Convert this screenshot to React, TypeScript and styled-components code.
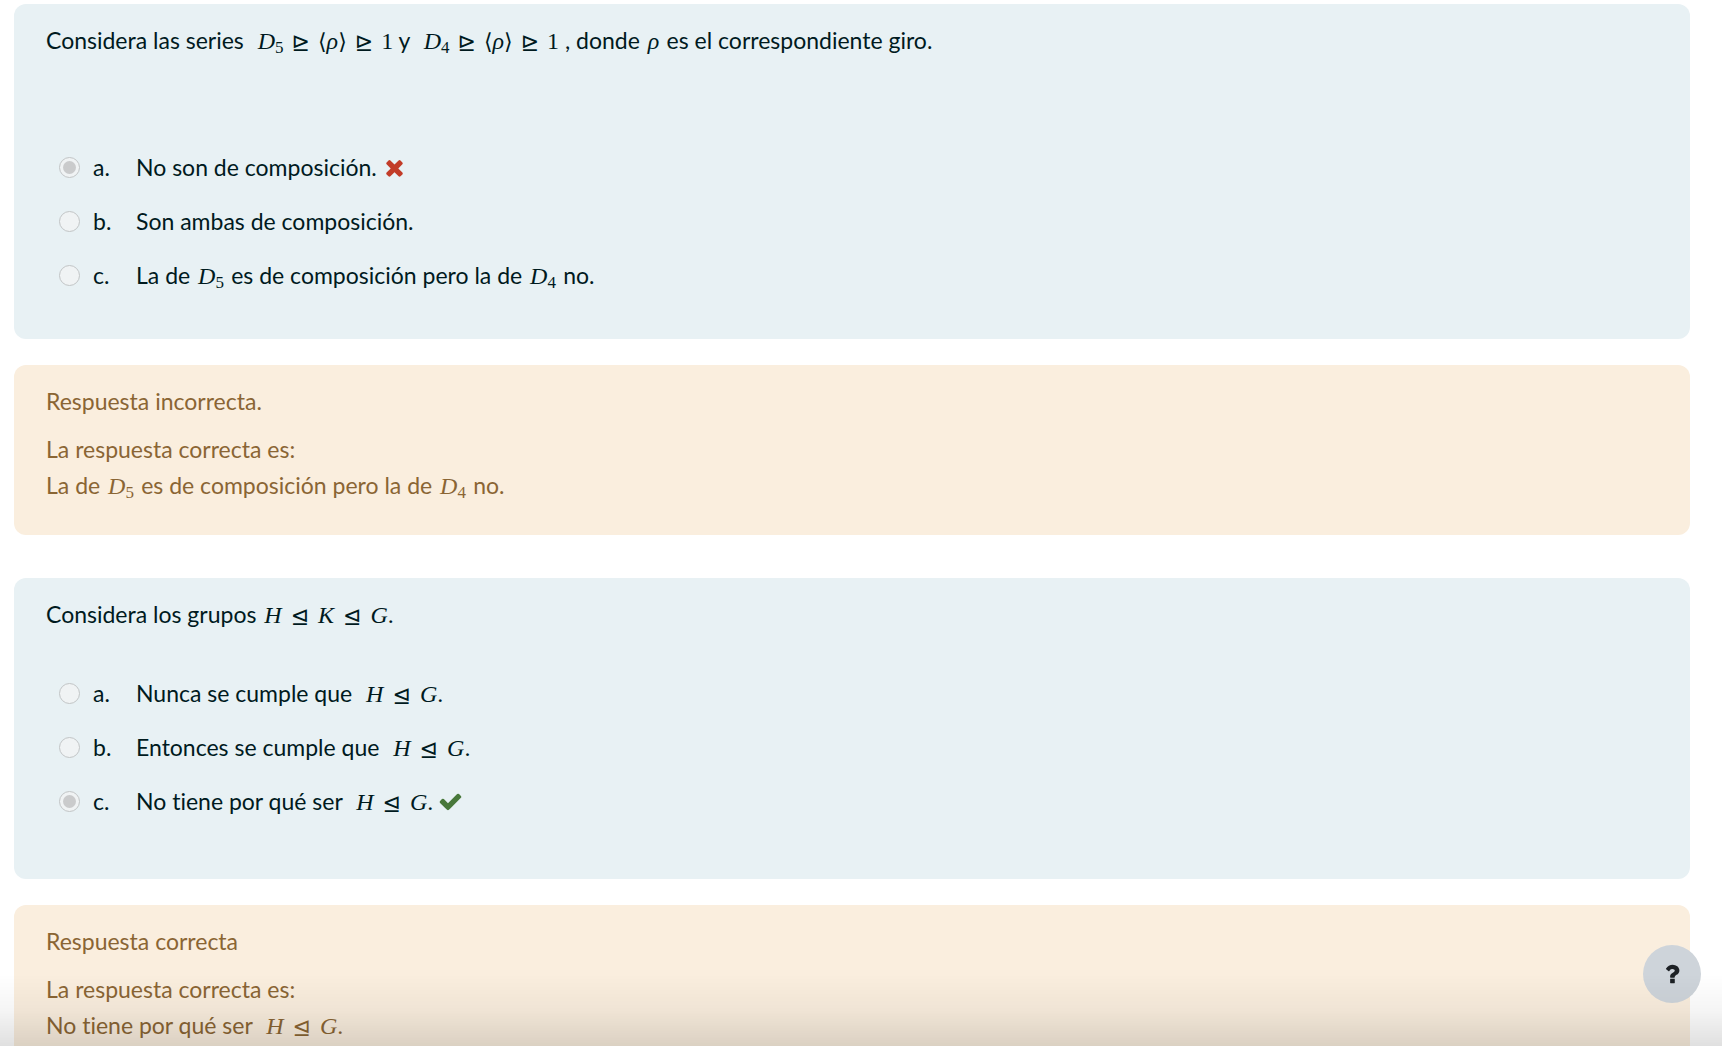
import React, { useId } from 'react';
import type { ReactNode } from 'react';
import styled, { createGlobalStyle } from 'styled-components';

const GlobalStyle = createGlobalStyle`
  *, *::before, *::after { box-sizing: border-box; }
  body {
    margin: 0;
    background: #fff;
    font-family: Lato, "Liberation Sans", sans-serif;
    font-size: 23px;
    line-height: 36px;
    font-variant-ligatures: none;
    color: #001a1e;
  }
`;

const Page = styled.main`
  height: 100vh;
  padding: 4px 32px 0 14px;
  overflow-y: auto;
  scrollbar-width: none;
`;

const Question = styled.article`
  margin-bottom: 43px;
`;

const Box = styled.section`
  padding: 18px 32px 32px;
  border-radius: 12px;
`;

const Formulation = styled(Box)`
  margin-bottom: 26px;
  background: #e8f1f4;
`;

const Feedback = styled(Box)`
  background: #faeede;
  color: #8a6534;
`;

const Text = styled.p`
  margin: 0;
`;

const Verdict = styled(Text)`
  margin-bottom: 12px;
`;

const Answers = styled.fieldset<{ $top: number; $bottom: number }>`
  display: flex;
  flex-direction: column;
  gap: 18px;
  min-width: 0;
  margin: ${({ $top }) => $top}px 0 ${({ $bottom }) => $bottom}px;
  padding: 0 0 0 13px;
  border: 0;
`;

const Answer = styled.div`
  display: flex;
  align-items: center;
`;

const Radio = styled.input`
  appearance: none;
  display: grid;
  place-items: center;
  flex: none;
  width: 21px;
  height: 21px;
  margin: 0 13px 0 0;
  border: 1px solid #c2c5c6;
  border-radius: 50%;
  background: #f0f3f4;

  &:checked::before {
    content: "";
    width: 13px;
    height: 13px;
    border-radius: 50%;
    background: #cacbcc;
  }
`;

const AnswerLabel = styled.label`
  display: flex;
`;

const Letter = styled.span`
  width: 43px;
`;

const Mark = styled.svg<{ $correct: boolean }>`
  width: 25px;
  height: 25px;
  margin-left: 5px;
  fill: ${({ $correct }) => ($correct ? '#48783a' : '#c23c28')};
`;

const Formula = styled.span<{ $wide?: boolean }>`
  margin-left: ${({ $wide }) => ($wide ? 8 : 2)}px;
  font-family: "Liberation Serif", "DejaVu Sans", serif;
  font-size: 24px;
  line-height: 0;
  white-space: nowrap;

  sub {
    font-size: 17px;
    line-height: 0;
    vertical-align: -4px;
  }
`;

const Relation = styled.span<{ $tight?: boolean }>`
  margin: 0 ${({ $tight }) => ($tight ? 8 : 9)}px;
  font-family: "DejaVu Sans", sans-serif;
  font-size: 22px;
  line-height: 0;
  vertical-align: -1px;
`;

const Bracket = styled.span`
  font-family: "DejaVu Sans", sans-serif;
  font-size: 22px;
  line-height: 0;
`;

const BottomShade = styled.div`
  position: fixed;
  inset: auto 0 0;
  z-index: 2;
  height: 72px;
  background: linear-gradient(to bottom, rgba(0, 0, 0, 0), rgba(0, 0, 0, 0.04) 50%, rgba(0, 0, 0, 0.12));
  pointer-events: none;
`;

const HelpButton = styled.button`
  position: fixed;
  right: 21px;
  bottom: 43px;
  z-index: 1;
  display: grid;
  place-items: center;
  width: 58px;
  height: 58px;
  padding: 0;
  border: 0;
  border-radius: 50%;
  background: #ced4da;
  color: #1d2125;

  svg {
    width: 26px;
    height: 26px;
    fill: currentColor;
  }
`;

const crossPath =
  'M1490 1322q0 40-28 68l-136 136q-28 28-68 28t-68-28l-294-294-294 294q-28 28-68 28t-68-28l-136-136q-28-28-28-68t28-68l294-294-294-294q-28-28-28-68t28-68l136-136q28-28 68-28t68 28l294 294 294-294q28-28 68-28t68 28l136 136q28 28 28 68t-28 68l-294 294 294 294q28 28 28 68z';
const checkPath =
  'M1671 566q0 40-28 68l-724 724-136 136q-28 28-68 28t-68-28l-136-136-362-362q-28-28-28-68t28-68l136-136q28-28 68-28t68 28l294 295 656-657q28-28 68-28t68 28l136 136q28 28 28 68z';
const helpPath =
  'M1088 1256v240q0 16-12 28t-28 12h-240q-16 0-28-12t-12-28v-240q0-16 12-28t28-12h240q16 0 28 12t12 28zm316-600q0 54-15.5 101t-35 76.5-55 59.5-57.5 43.5-61 35.5q-41 23-68.5 65t-27.5 67q0 17-12 32.5t-28 15.5h-240q-15 0-25.5-18.5t-10.5-37.5v-45q0-83 65-156.5t143-108.5q59-27 84-56t25-76q0-42-46.5-74t-107.5-32q-65 0-108 29-35 25-107 115-13 16-31 16-12 0-25-8l-164-125q-13-10-15.5-25t5.5-28q160-266 464-266 80 0 161 31t146 83 106 127.5 41 158.5z';

function Dihedral({ n }: { n: number }) {
  return <><i>D</i><sub>{n}</sub></>;
}

function Series({ n }: { n: number }) {
  return (
    <Formula $wide>
      <Dihedral n={n} />
      <Relation $tight>⊵</Relation>
      <Bracket>⟨</Bracket><i>ρ</i><Bracket>⟩</Bracket>
      <Relation $tight>⊵</Relation>1
    </Formula>
  );
}

function Normal({ groups, wide }: { groups: string[]; wide?: boolean }) {
  return (
    <Formula $wide={wide}>
      {groups.map((g, i) => (
        <React.Fragment key={g}>
          {i > 0 && <Relation>⊴</Relation>}
          <i>{g}</i>
        </React.Fragment>
      ))}
      .
    </Formula>
  );
}

function DihedralAnswer() {
  return (
    <span>
      La de <Formula><Dihedral n={5} /></Formula>{' '}
      <span>&#8202;es de composición pero la de </span>
      <Formula><Dihedral n={4} /></Formula> &#8202;no.
    </span>
  );
}

interface Choice {
  text: ReactNode;
  result?: 'correct' | 'incorrect';
}

function Choices({ choices, top, bottom }: { choices: Choice[]; top: number; bottom: number }) {
  const name = useId();
  return (
    <Answers $top={top} $bottom={bottom} disabled aria-label="Respuestas">
      {choices.map(({ text, result }, i) => {
        const id = `${name}-${i}`;
        return (
          <Answer key={id}>
            <Radio type="radio" id={id} name={name} defaultChecked={Boolean(result)} />
            <AnswerLabel htmlFor={id}>
              <Letter>{'abc'[i]}.</Letter>
              <span>{text}</span>
            </AnswerLabel>
            {result && (
              <Mark $correct={result === 'correct'} viewBox="0 0 1792 1792" aria-hidden="true">
                <path d={result === 'correct' ? checkPath : crossPath} />
              </Mark>
            )}
          </Answer>
        );
      })}
    </Answers>
  );
}

const seriesChoices: Choice[] = [
  { text: 'No son de composición.', result: 'incorrect' },
  { text: 'Son ambas de composición.' },
  { text: <DihedralAnswer /> },
];

const groupChoices: Choice[] = [
  { text: <>Nunca se cumple que <Normal wide groups={['H', 'G']} /></> },
  { text: <>Entonces se cumple que <Normal wide groups={['H', 'G']} /></> },
  { text: <>No tiene por qué ser <Normal wide groups={['H', 'G']} /></>, result: 'correct' },
];

export default function App() {
  return (
    <>
      <GlobalStyle />
      <Page>
        <Question>
          <Formulation>
            <Text>
              Considera las series <Series n={5} /> y <Series n={4} /> , donde{' '}
              <Formula><i>ρ</i></Formula> &#8202;es el correspondiente giro.
            </Text>
            <Choices choices={seriesChoices} top={91} bottom={14} />
          </Formulation>
          <Feedback>
            <Verdict>Respuesta incorrecta.</Verdict>
            <Text>La respuesta correcta es:</Text>
            <Text><DihedralAnswer /></Text>
          </Feedback>
        </Question>
        <Question>
          <Formulation>
            <Text>Considera los grupos <Normal groups={['H', 'K', 'G']} /></Text>
            <Choices choices={groupChoices} top={43} bottom={28} />
          </Formulation>
          <Feedback>
            <Verdict>Respuesta correcta</Verdict>
            <Text>La respuesta correcta es:</Text>
            <Text>No tiene por qué ser <Normal wide groups={['H', 'G']} /></Text>
          </Feedback>
        </Question>
      </Page>
      <HelpButton type="button" aria-label="Ayuda">
        <svg viewBox="0 0 1792 1792" aria-hidden="true"><path d={helpPath} /></svg>
      </HelpButton>
      <BottomShade />
    </>
  );
}
